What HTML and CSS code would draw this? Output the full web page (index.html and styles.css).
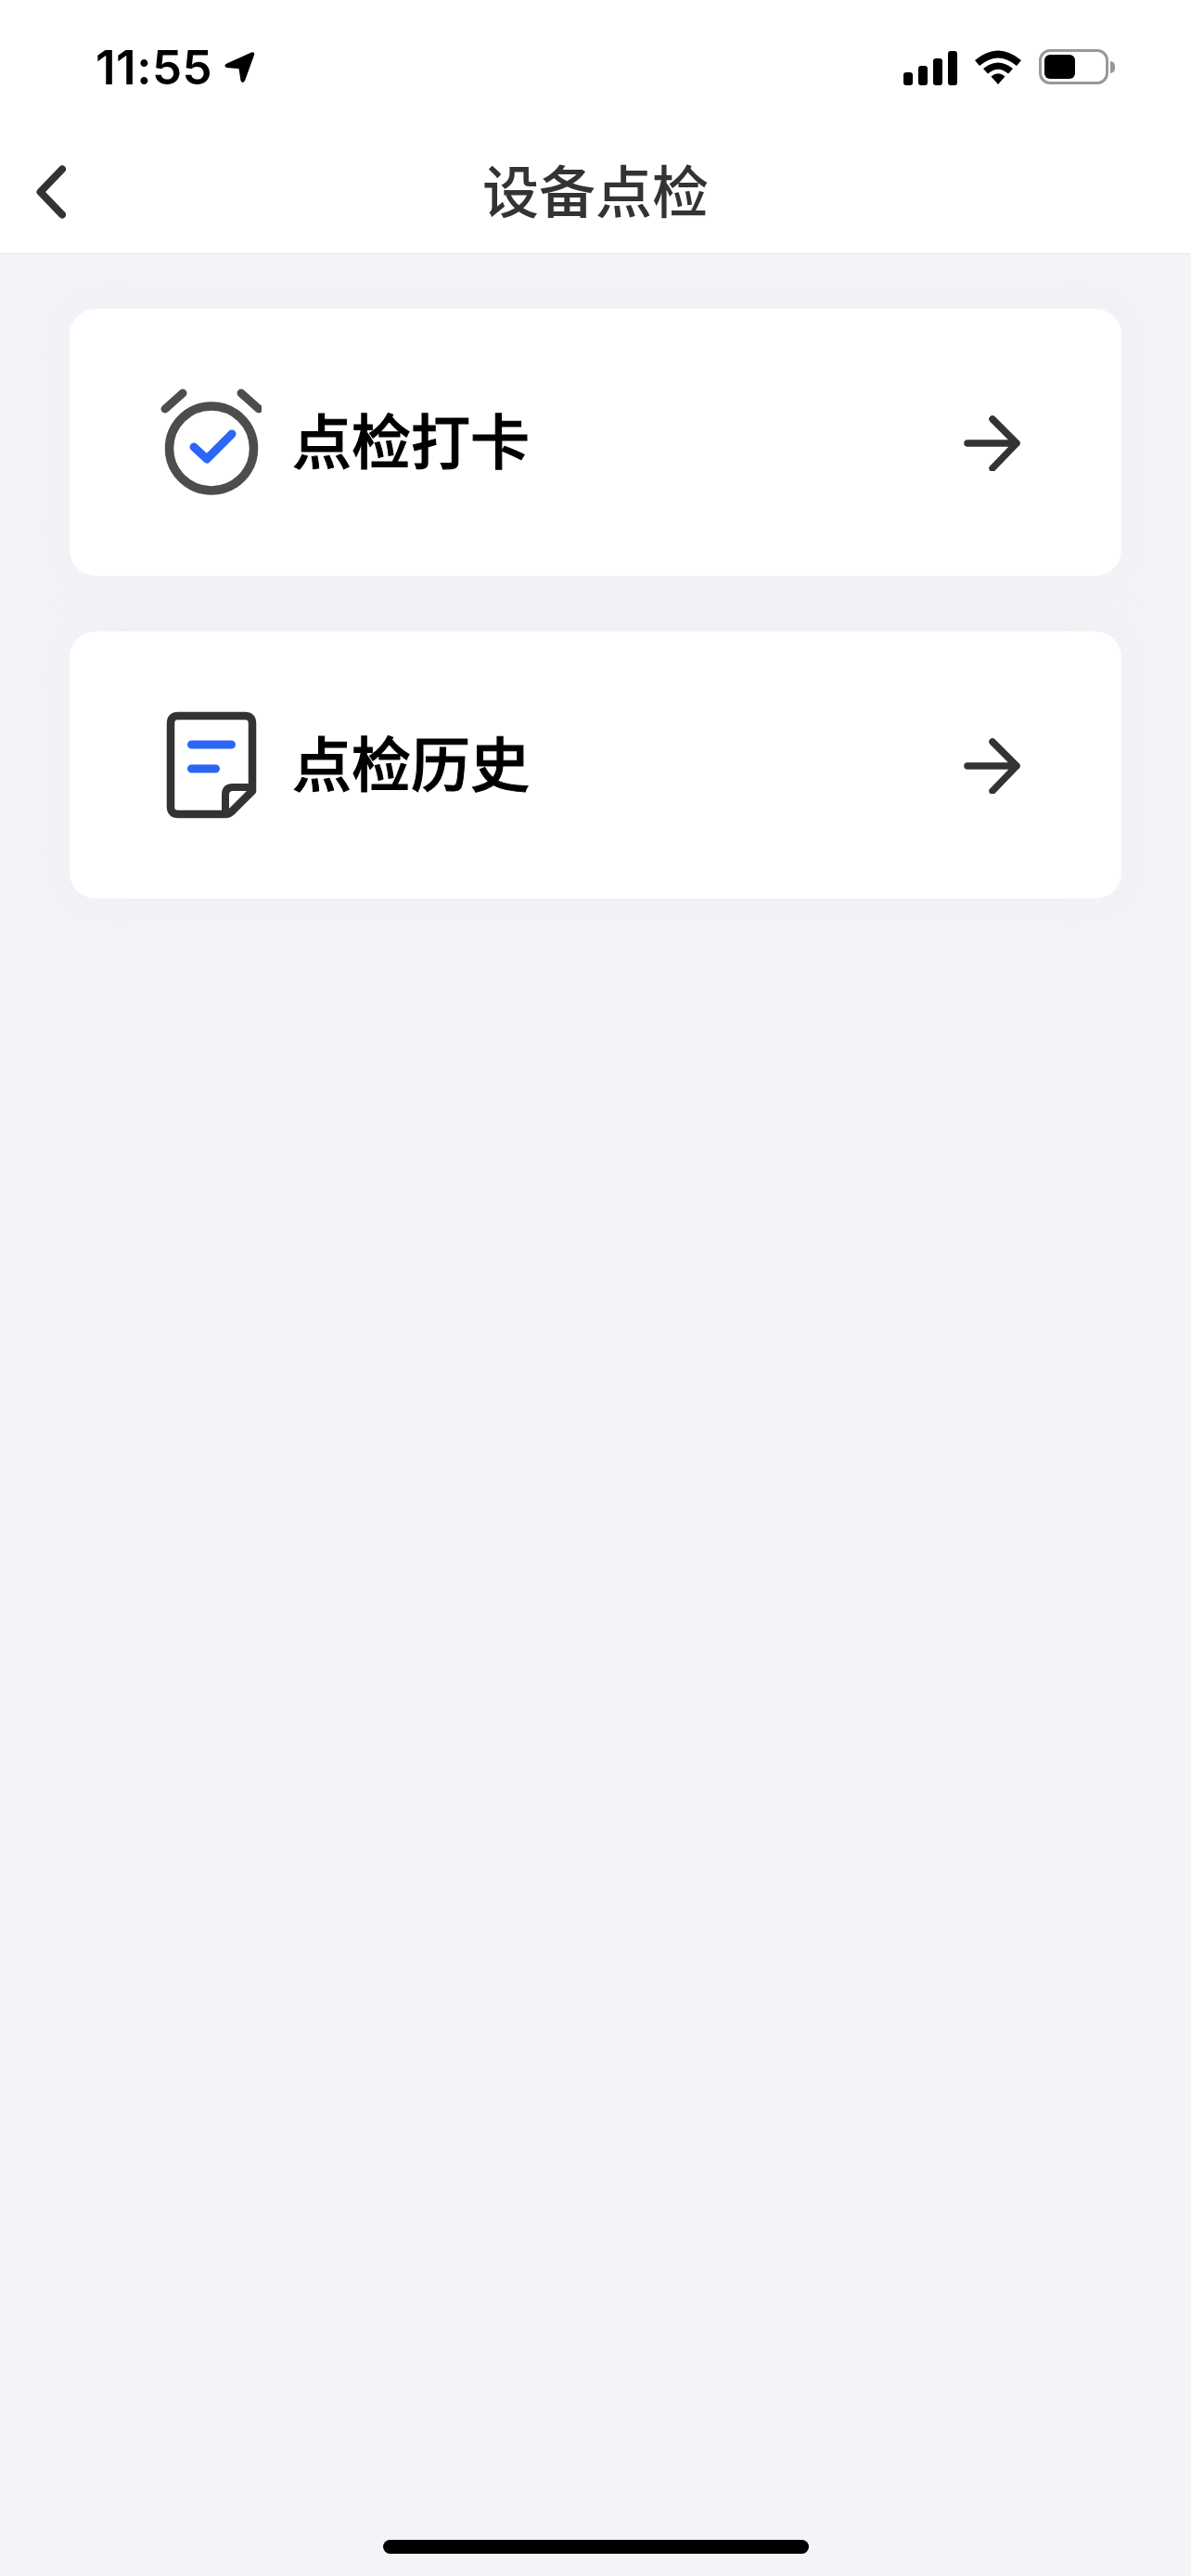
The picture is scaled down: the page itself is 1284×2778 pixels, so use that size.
FILE: index.html
```html
<!DOCTYPE html>
<html lang="zh-CN">
<head>
    <meta charset="UTF-8">
    <meta name="viewport" content="width=device-width, initial-scale=1.0">
    <title>设备点检</title>
    <link rel="stylesheet" href="styles.css">
</head>
<body>
    <!-- Status bar -->
    <div class="status-bar">
        <div class="status-left">
            <span class="time">11:55</span>
            <svg class="status-arrow" width="33" height="34" viewBox="0 0 33 34">
                <path d="M1.500 13 L29 .5 Q33 -.5 32 3.500 L22 31 Q19.500 35 17.500 31 L15.500 18 L2.500 17 Q-1 15.500 1.500 13 Z" fill="#000"/>
            </svg>
        </div>
        <div class="status-right">
            <div class="signal">
                <span class="bar bar-1"></span>
                <span class="bar bar-2"></span>
                <span class="bar bar-3"></span>
                <span class="bar bar-4"></span>
            </div>
            <svg class="wifi" width="50" height="37" viewBox="0 0 50 37">
                <path d="M0 11 Q25 -10 50 11 L45 17 Q25 0 5 17 Z" fill="#000"/>
                <path d="M9 20 Q25 7 41 20 L36 25.500 Q25 16 14 25.500 Z" fill="#000"/>
                <path d="M17.500 28.500 Q25 22 32.500 28.500 L25 37 Z" fill="#000"/>
            </svg>
            <div class="battery">
                <div class="battery-body"><div class="battery-level"></div></div>
                <div class="battery-nub"></div>
            </div>
        </div>
    </div>

    <!-- Header -->
    <header class="nav-bar">
        <svg class="back" width="40" height="64" viewBox="0 0 40 64">
            <path d="M36 7.500 L12.500 32 L36 56.500" fill="none" stroke="#333" stroke-width="8" stroke-linecap="round" stroke-linejoin="round"/>
        </svg>
        <h1>设备点检</h1>
    </header>

    <!-- Menu cards -->
    <main class="menu">
        <a class="card" href="#">
            <svg class="card-icon" width="110" height="120" viewBox="0 0 110 120">
                <circle cx="56" cy="66.500" r="45.500" fill="none" stroke="#4d4d4d" stroke-width="9.500"/>
                <path d="M6 24 L25 7 M88 7 L107 24" fill="none" stroke="#4d4d4d" stroke-width="9" stroke-linecap="round"/>
                <path d="M37 65 L51 78 L78 51" fill="none" stroke="#2b66f6" stroke-width="9" stroke-linecap="round" stroke-linejoin="round"/>
            </svg>
            <span class="card-label">点检打卡</span>
            <svg class="card-arrow" width="62" height="60" viewBox="0 0 62 60">
                <path d="M4 30 H57 M31 4 L57 30 L31 57" fill="none" stroke="#333" stroke-width="7.500" stroke-linecap="round" stroke-linejoin="round"/>
            </svg>
        </a>
        <a class="card" href="#">
            <svg class="card-icon" width="110" height="120" viewBox="0 0 110 120">
                <path d="M20 7 H92 Q100 7 100 15 V88 L78 110 Q75 113 71 113 H20 Q12 113 12 105 V15 Q12 7 20 7 Z" fill="none" stroke="#333" stroke-width="8.500" stroke-linejoin="round"/>
                <path d="M71 113 V92 Q71 84 79 84 H100" fill="none" stroke="#333" stroke-width="8" stroke-linejoin="round"/>
                <path d="M34.500 38 H77.500 M34.500 64 H60.500" fill="none" stroke="#2b66f6" stroke-width="9" stroke-linecap="round"/>
            </svg>
            <span class="card-label">点检历史</span>
            <svg class="card-arrow" width="62" height="60" viewBox="0 0 62 60">
                <path d="M4 30 H57 M31 4 L57 30 L31 57" fill="none" stroke="#333" stroke-width="7.500" stroke-linecap="round" stroke-linejoin="round"/>
            </svg>
        </a>
    </main>

    <div class="home-indicator"></div>
</body>
</html>
```

FILE: styles.css
```css
* {
    box-sizing: border-box;
}
body {
    margin: 0;
    height: 2778px;
    position: relative;
    overflow: hidden;
    background-color: #f3f4f8;
    font-family: "Noto Sans CJK SC", "Noto Sans", sans-serif;
    color: #000;
}

/* status bar */
.status-bar {
    height: 110px;
    background-color: white;
    display: flex;
    justify-content: space-between;
    padding: 53px 82px 0 103px;
}
.status-left {
    display: flex;
    align-items: flex-start;
    gap: 13px;
}
.time {
    font-family: Inter, sans-serif;
    font-size: 51px;
    font-weight: 600;
    line-height: 40px;
    letter-spacing: .5px;
}
.status-arrow {
    margin-top: 3px;
}
.status-right {
    display: flex;
    align-items: flex-start;
    gap: 19px;
}
.signal {
    display: flex;
    align-items: flex-end;
    gap: 6px;
    height: 38px;
    margin-top: 1px;
}
.bar {
    width: 10px;
    background-color: #000;
    border-radius: 3px;
}
.bar-1 { height: 14px; }
.bar-2 { height: 21px; }
.bar-3 { height: 29px; }
.bar-4 { height: 37px; }
.wifi {
    margin-top: 1px;
}
.battery {
    display: flex;
    align-items: center;
    gap: 2px;
}
.battery-body {
    width: 75px;
    height: 38px;
    border: 3px solid #999;
    border-radius: 12px;
    padding: 3px;
}
.battery-level {
    width: 33px;
    height: 100%;
    background-color: #000;
    border-radius: 6px;
}
.battery-nub {
    width: 5px;
    height: 13px;
    background-color: #999;
    border-radius: 0 6px 6px 0;
}

/* header */
.nav-bar {
    height: 164px;
    background-color: white;
    border-bottom: 1px solid #e5e5e6;
    display: flex;
    align-items: center;
    justify-content: center;
    position: relative;
    padding-top: 24px;
}
.nav-bar h1 {
    margin: 0;
    font-size: 61px;
    font-weight: 500;
    color: #333;
    line-height: 80px;
}
.back {
    position: absolute;
    left: 31px;
    top: 65px;
}

/* cards */
.menu {
    display: flex;
    flex-direction: column;
    gap: 60px;
    padding: 59px 75px 0;
}
.card {
    height: 288px;
    background-color: white;
    border-radius: 28px;
    box-shadow: 0 0 40px rgba(235, 237, 243, 0.5);
    display: flex;
    align-items: center;
    padding: 0 108px 0 97px;
    color: #000;
    text-decoration: none;
}
.card-icon {
    flex-shrink: 0;
    margin-right: 33px;
}
.card-label {
    flex: 1;
    font-size: 64px;
    font-weight: 500;
    line-height: 80px;
    margin-top: -10px;
    -webkit-text-stroke: 1px #000;
}
.card-arrow {
    flex-shrink: 0;
    margin-top: 1px;
}

.home-indicator {
    position: absolute;
    left: 413px;
    bottom: 24px;
    width: 459px;
    height: 15px;
    background-color: #000;
    border-radius: 8px;
}
```
